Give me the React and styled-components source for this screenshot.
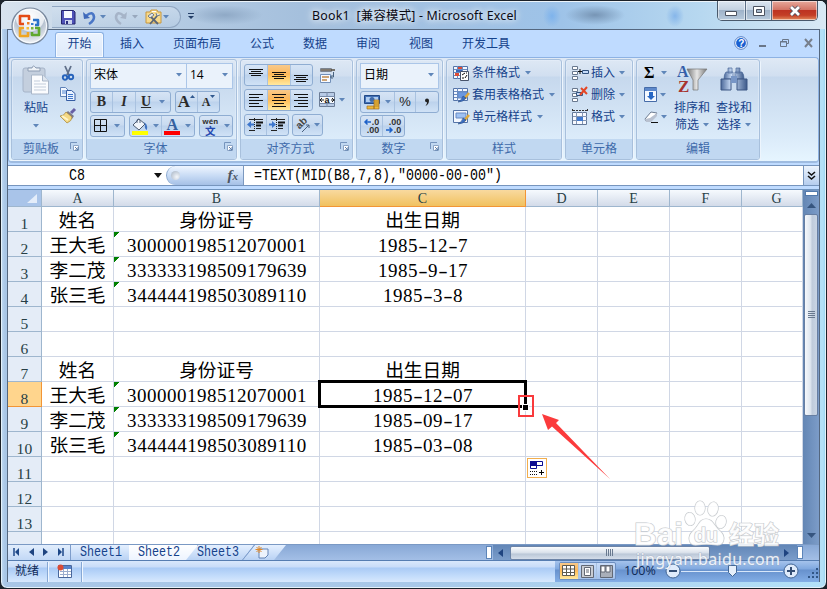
import React from "react";
import styled, { createGlobalStyle } from "styled-components";

const UI = '"Open Sans", "Noto Sans CJK SC", sans-serif';
const BLUE = "#15428b";

const Global = createGlobalStyle`
  * { box-sizing: border-box; }
  html, body { margin: 0; width: 827px; height: 589px; overflow: hidden; background: #1d242c; }
  svg { display: block; flex: none; overflow: visible; }
`;

const Window = styled.div`
  position: relative;
  width: 827px;
  height: 589px;
  padding: 0 6px 6px;
  border: 1px solid #1b2129;
  border-radius: 7px;
  overflow: hidden;
  font: 12px/16px ${UI};
  color: ${BLUE};
  background: linear-gradient(90deg, #c3dcf4 0, #a8c6e6 4px, #a8c8e8 50%, #b3e1f8 822px, #8fd0ee 100%);
  box-shadow: inset 0 0 0 1px #e4f2fb;
`;

const TitleBar = styled.header`
  display: flex;
  height: 28px;
  margin: 0 -6px;
  padding-left: 51px;
  background:
    radial-gradient(ellipse 30px 10px at 594px 14px, #7795b5 0, #7795b500),
    radial-gradient(ellipse 38px 10px at 224px 14px, #8fa9c6 0, #8fa9c600),
    radial-gradient(ellipse 9px 11px at 551px 15px, #7eb3ec 0, #7eb3ec00),
    radial-gradient(ellipse 9px 11px at 674px 15px, #86b6ea 0, #86b6ea00),
    linear-gradient(90deg, #d8e3ee, #b4cbe3 170px, #a5c0dd 300px, #9ec3e8 560px, #b7d8f0 700px, #d8e9f5);
  box-shadow: inset 0 1px #ecf4fa;
`;
const QuickBar = styled.div`
  display: flex;
  align-items: center;
  width: 129px;
  height: 22px;
  margin-top: 5px;
  padding-left: 9px;
  border: 1px solid #91a7c2;
  border-left: 0;
  border-radius: 0 12px 12px 0;
  background: linear-gradient(#d2e0ef99, #b8cde388);
`;
const Gap = styled.i`
  flex: none;
  width: ${(p) => p.$w}px;
`;
const MoreMark = styled.div`
  width: 20px;
  padding: 12px 0 0 7px;
`;
const WindowTitle = styled.h1`
  width: 240px;
  margin: 6px 0 0 111px;
  font: 12.4px/17px "Noto Sans", "Noto Sans CJK SC", sans-serif;
  letter-spacing: 0.2px;
  color: #0a0a14;
  white-space: pre;
  text-shadow: 0 0 6px #fff, 0 0 10px #fff;
`;
const Caption = styled.div`
  display: flex;
  width: 101px;
  height: 20px;
  margin-left: auto;
  margin-right: 8px;
  border: 1px solid #49596b;
  border-top: 0;
  border-radius: 0 0 5px 5px;
  overflow: hidden;
`;
const CaptionButton = styled.span`
  display: flex;
  align-items: center;
  justify-content: center;
  width: ${(p) => p.$w}px;
  border-right: ${(p) => (p.$close ? 0 : "1px solid #5b6f86")};
  background: ${(p) =>
    p.$close
      ? "linear-gradient(#e7a99c, #d37566 45%, #bd3322 50%, #c43e26 75%, #e28a5c)"
      : "linear-gradient(#dce6f0, #c4d2e1 45%, #9fb3c9 50%, #b8cadc)"};
  box-shadow: inset 0 0 0 1px #ffffff88;
`;

const Client = styled.main`
  display: flex;
  flex-direction: column;
  width: 813px;
  height: 553px;
  border: 1px solid #54677f;
  background: #bfdbff;
`;
const TabRow = styled.nav`
  display: flex;
  flex: none;
  height: 27px;
  padding: 2px 6px 0 47px;
  background: #bfdbff;
`;
const Tab = styled.span`
  padding: ${(p) => (p.$active ? "3px 11.5px 0" : "4px 14.5px 0")};
  height: 25px;
  margin-right: ${(p) => (p.$active ? "1.5px" : 0)};
  border: ${(p) => (p.$active ? "1px solid #8db2e3" : 0)};
  border-bottom: 0;
  border-radius: 3px 3px 0 0;
  background: ${(p) => (p.$active ? "linear-gradient(#ebf3fe, #dfeafa)" : "none")};
  box-shadow: ${(p) => (p.$active ? "inset 0 0 0 1px #f6faff" : "none")};
`;
const TabTools = styled.div`
  display: flex;
  align-items: flex-start;
  margin-left: auto;
  padding-top: 4px;
`;

const Ribbon = styled.section`
  display: flex;
  flex: none;
  width: 811px;
  height: 106px;
  padding: 1px 2px;
  border: 1px solid #8db2e3;
  border-width: 1px 1px 2px;
  border-bottom-color: #9ebbe0;
  border-radius: 4px;
  background: linear-gradient(#dfe9f5, #d1dff0 18px, #c6d8ed 19px, #dcecfa 82px, #e6f5ff);
`;
const Group = styled.div`
  display: flex;
  flex-direction: column;
  width: ${(p) => p.$w}px;
  height: 101px;
  margin-right: 3px;
  border: 1px solid #a8c0dc;
  border-radius: 3px;
  box-shadow: inset 0 0 0 1px #e8f1fb77, 1px 1px #edf5fd;
  overflow: hidden;
`;
const GroupBody = styled.div`
  display: flex;
  flex-direction: ${(p) => (p.$row ? "row" : "column")};
  flex: 1;
  padding: ${(p) => p.$pad || "3px 3px 0"};
`;
const GroupLabel = styled.div`
  display: flex;
  justify-content: center;
  height: 20px;
  line-height: 20px;
  color: #3e6aaa;
  background: #c1d8f1;
`;
const LabelText = styled.span`
  flex: 1;
  text-align: center;
  padding-left: ${(p) => (p.$shift || 0)}px;
`;
const Line = styled.div`
  display: flex;
  align-items: center;
  flex: none;
  height: ${(p) => p.$h || 22}px;
  margin-top: ${(p) => p.$mt || 0}px;
`;
const Stack = styled.div`
  display: flex;
  flex-direction: column;
  align-items: ${(p) => p.$align || "center"};
  width: ${(p) => p.$w}px;
`;
const Combo = styled.div`
  display: flex;
  align-items: center;
  width: ${(p) => p.$w}px;
  height: 26px;
  margin-right: ${(p) => (p.$join ? -1 : 0)}px;
  padding: 0 4px 2px 3px;
  justify-content: space-between;
  border: 1px solid #abc6e8;
  background: #eaf2fb;
  color: #000;
`;
const Buttons = styled.div`
  display: flex;
  height: 22px;
  margin-right: ${(p) => p.$gap || 0}px;
  border: 1px solid #8fadd2;
  border-radius: 3px;
  overflow: hidden;
  background: linear-gradient(#d6e4f5, #c9dbf0 45%, #bcd2ec 50%, #d0e2f6);
`;
const Button = styled.span`
  display: flex;
  align-items: center;
  justify-content: center;
  gap: ${(p) => p.$gap || 0}px;
  width: ${(p) => p.$w}px;
  border-right: 1px solid #a9c2e0;
  background: ${(p) => (p.$on ? "linear-gradient(#f8c98a, #fdb85a 45%, #ffc765 60%, #ffe9a0)" : "none")};
  &:last-child { border-right: 0; }
`;
const Letter = styled.b`
  font: ${(p) => (p.$italic ? "italic " : "")}bold ${(p) => p.$size || 14}px/${(p) => p.$lh || 18}px "Liberation Serif", serif;
  text-decoration: ${(p) => (p.$under ? "underline" : "none")};
  color: ${(p) => p.$color || "#2b2b2b"};
`;
const Percent = styled.span`
  font: 13px/16px "Liberation Sans", sans-serif;
  color: #222;
`;
const ColorBar = styled.span`
  display: flex;
  flex-direction: column;
  align-items: center;
  justify-content: flex-end;
  width: 16px;
  height: 17px;
  border-bottom: 4px solid ${(p) => p.$color};
`;
const Phonetic = styled.span`
  display: flex;
  flex-direction: column;
  align-items: center;
  width: 17px;
  font: bold 7.5px/8px "Open Sans", sans-serif;
  color: #333;
`;
const PhoneticGlyph = styled.span`
  font: bold 10.5px/11px "Noto Sans CJK SC", sans-serif;
  color: #2348b0;
`;
const Decimal = styled.span`
  display: flex;
  flex-direction: column;
  align-items: flex-end;
  font: bold 9px/8px "Liberation Sans", sans-serif;
  color: #333;
`;
const DecimalLine = styled.span`
  display: flex;
  align-items: center;
  height: 8px;
`;
const Command = styled.div`
  display: flex;
  align-items: center;
  flex: none;
  height: 22px;
  gap: 2px;
  white-space: nowrap;
`;

const FormulaRow = styled.div`
  display: flex;
  flex: none;
  height: 21px;
  margin-top: 2px;
  border: 1px solid #7795bd;
  border-width: 1px 0;
  background: #fff;
`;
const NameBox = styled.div`
  display: flex;
  align-items: center;
  width: 158px;
  padding: 0 4px 0 61px;
  justify-content: space-between;
`;
const MonoText = styled.span`
  display: block;
  font-family: "Liberation Mono", monospace;
  font-size: ${(p) => p.$size || 13.33}px;
  transform: scaleY(1.18);
  white-space: pre;
  color: ${(p) => p.$color || "#000"};
`;
const FxArea = styled.div`
  display: flex;
  align-items: center;
  justify-content: space-between;
  width: 78px;
  padding: 0 5px 0 4px;
  border-right: 1px solid #7b98bf;
  border-left: 1px solid #8ba9d0;
  border-radius: 10px 0 0 10px;
  background: linear-gradient(#f0f6ff, #c9dcf5 50%, #a5c0e6);
`;
const Knob = styled.i`
  width: 9px;
  height: 9px;
  border-radius: 50%;
  background: radial-gradient(circle at 65% 65%, #f4f7fb, #a4b1c2);
`;
const Fx = styled.i`
  font: italic bold 15px/18px "Liberation Serif", serif;
  color: #4d5563;
  small { font-size: 11px; }
`;
const FormulaText = styled.div`
  display: flex;
  align-items: center;
  flex: 1;
  padding-left: 10px;
`;
const Expand = styled.div`
  display: flex;
  align-items: center;
  justify-content: center;
  width: 16px;
  border-left: 1px solid #7795bd;
  background: linear-gradient(#edf4fd, #b5cdee);
`;

const Workspace = styled.div`
  display: flex;
  flex: none;
  height: 355px;
  margin-top: 3px;
  border-top: 1px solid #6f93bd;
`;
const Sheet = styled.div`
  position: relative;
  display: grid;
  grid-template-columns: 34px 72px 206px 206px 72px 72px 72px 61px;
  grid-template-rows: 17px repeat(14, 25px);
  width: 795px;
  height: 354px;
  overflow: hidden;
  background: #fff;
`;
const Head = styled.div`
  display: flex;
  align-items: ${(p) => (p.$row ? "flex-end" : "center")};
  justify-content: center;
  padding-left: ${(p) => (p.$wide ? 9 : 0)}px;
  border-right: 1px solid #9eb6ce;
  border-bottom: 1px solid #9eb6ce;
  color: #273f46;
  font: ${(p) => (p.$row ? 15.5 : 14)}px/15px "Liberation Serif", serif;
  letter-spacing: ${(p) => (p.$row ? 0.3 : 0)}px;
  background: ${(p) =>
    p.$on
      ? p.$row ? "#ffd58d" : "linear-gradient(#f9d99f, #f1c15f)"
      : p.$row ? "#e4ecf7" : "linear-gradient(#f6fafe, #d3dbe9)"};
  border-color: ${(p) => (p.$on ? "#f29536" : "#9eb6ce")};
`;
const Corner = styled.div`
  display: flex;
  align-items: flex-end;
  justify-content: flex-end;
  padding: 0 4px 3px 0;
  border-right: 1px solid #9eb6ce;
  border-bottom: 1px solid #9eb6ce;
  background: #a9c4e9;
`;
const Cell = styled.div`
  display: flex;
  align-items: center;
  justify-content: center;
  padding-top: 3px;
  border-right: 1px solid #d0d7e5;
  border-bottom: 1px solid #d0d7e5;
  color: #000;
  font: 18.7px/21px "Liberation Serif", "Noto Sans CJK SC", serif;
  background: ${(p) =>
    p.$flag ? "linear-gradient(135deg, #008000 0 4px, transparent 4px) 0 0 / 8px 8px no-repeat #fff" : "#fff"};
`;
const Digits = styled.span`
  font-size: 19px;
  letter-spacing: 0.5px;
  line-height: 21px;
  padding: 0 0 1px 1px;
`;
const Dash = styled.span`
  display: inline-block;
  width: 10px;
  text-align: center;
  letter-spacing: 0;
  transform: scaleX(1.5);
`;
const Selection = styled.div`
  position: absolute;
  left: 310px;
  top: 190px;
  width: 209px;
  height: 28px;
  border: 3px solid #000;
`;
const RedFrame = styled.div`
  position: absolute;
  left: 510px;
  top: 205px;
  width: 16px;
  height: 22px;
  padding: 7px 0 0 2px;
  border: 2px solid #f93a3c;
`;
const Handle = styled.i`
  display: block;
  width: 7px;
  height: 7px;
  border: 1px solid #fff;
  background: #000;
`;
const FillOptions = styled.div`
  position: absolute;
  left: 519px;
  top: 268px;
  width: 20px;
  height: 20px;
  padding: 2px;
  border: 1px solid #f2ae4c;
  background: #fff;
`;
const Pointer = styled.svg`
  position: absolute;
  left: 533px;
  top: 223px;
`;

const VScroll = styled.div`
  display: flex;
  flex-direction: column;
  align-items: center;
  width: 16px;
  background: linear-gradient(90deg, #6386b4, #7c9cc8);
`;
const SplitH = styled.i`
  width: 13px;
  height: 5px;
  margin: 1px 0;
  border: 1px solid #527aac;
  background: #fff;
`;
const VThumb = styled.div`
  display: flex;
  align-items: center;
  justify-content: center;
  width: 14px;
  height: 202px;
  margin: 3px 0 auto;
  border: 1px solid #667ea2;
  border-radius: 2px;
  background: linear-gradient(90deg, #f5f8fc, #dde5ef 45%, #bfcbdb 60%, #c9d5e5);
`;

const SheetBar = styled.div`
  display: flex;
  flex: none;
  height: 16px;
  border-top: 1px solid #7a99c4;
  background: linear-gradient(#88a8d6, #a3bfe6);
`;
const NavArrows = styled.div`
  display: flex;
  align-items: center;
  width: 63px;
  padding: 0 6px 1px 5px;
  justify-content: space-between;
  background: linear-gradient(#e1edfc, #c2d8f6);
  border-right: 1px solid #7e9dcb;
`;
const TabStrip = styled.div`
  display: flex;
  width: 415px;
`;
const SheetTab = styled.div`
  width: ${(p) => p.$w}px;
  height: 15px;
  margin-left: ${(p) => p.$ml || 0}px;
  padding: 0 0 0 ${(p) => p.$pl}px;
  line-height: 14px;
  clip-path: ${(p) => (p.$slant ? "polygon(12px 0, 100% 0, calc(100% - 12px) 100%, 0 100%)" : "none")};
  background: ${(p) => (p.$on ? "linear-gradient(#fff, #edf4ff)" : "linear-gradient(#e5f0ff, #b9d2f4)")};
`;
const SlantEdge = styled.svg`
  margin-left: -12px;
  z-index: 1;
`;
const SplitV = styled.i`
  width: 6px;
  height: 13px;
  margin: 1px 1px 0 0;
  border: 1px solid #5c84b8;
  background: #fff;
`;
const HScroll = styled.div`
  display: flex;
  align-items: center;
  width: 304px;
  padding: 0 5px;
  background: linear-gradient(#6286b7, #7b9dca);
`;
const HThumb = styled.div`
  display: flex;
  align-items: center;
  justify-content: center;
  width: 200px;
  height: 14px;
  margin: 0 auto 0 7px;
  border: 1px solid #6d84a7;
  border-radius: 2px;
  background: linear-gradient(#fafbfd, #dce3ec 45%, #bcc8d8 60%, #d4dde9);
`;

const StatusBar = styled.footer`
  display: flex;
  flex: 1;
  align-items: center;
  border-top: 1px solid #567db1;
  background: linear-gradient(#d9e8fc, #c8dcf8 6px, #a9caf5 7px, #c3dcfb 15px, #d7e8fd);
`;
const StatusText = styled.span`
  width: ${(p) => p.$w}px;
  padding-left: ${(p) => p.$pl}px;
  padding-bottom: 1px;
  font-size: ${(p) => p.$size || 12}px;
  color: #102a56;
`;
const Divider = styled.i`
  width: 2px;
  height: 20px;
  border-left: 1px solid #86a8d5;
  border-right: 1px solid #f0f7ff;
`;
const ZoomArea = styled.div`
  display: flex;
  align-items: center;
  height: 21px;
  width: 264px;
  margin-left: auto;
  padding: 0 0 1px 4px;
  background: linear-gradient(#a5c3ec, #7fa8df 8px, #6791cd 9px, #83aee6);
`;
const ViewButtons = styled.div`
  display: flex;
  width: 57px;
  height: 18px;
  border: 1px solid #6d8fc0;
  border-radius: 2px;
  background: linear-gradient(#c8dcf8, #a3c2ec);
`;
const SliderTrack = styled.div`
  display: flex;
  align-items: center;
  justify-content: center;
  width: 102px;
  height: 16px;
  background: linear-gradient(#d7e6fa, #d7e6fa) 0 8px / 100% 1px no-repeat;
`;
const Grip = styled.div`
  align-self: flex-end;
  margin-left: auto;
  padding: 0 0 2px;
`;

const Orb = styled.div`
  position: absolute;
  left: 10px;
  top: 6px;
`;
const Watermark = styled.div`
  position: absolute;
  left: 633px;
  top: 498px;
  width: 160px;
  height: 74px;
`;

const Down = ({ c = "#5f86b9" }) => (
  <svg width="6" height="4"><path d="M0 0h6L3 3.500z" fill={c} /></svg>
);
const Launcher = () => (
  <svg width="12" height="20" viewBox="0 0 12 20">
    <path d="M.5 10V3.500H7" stroke="#7594bd" fill="none" /><path d="M3.500 6.500h5v5h-5z" fill="#fff" stroke="#8ba4c6" /><path d="M5 8l3 3m0-3v3H5" stroke="#5d7eab" fill="none" />
  </svg>
);
const Label = ({ children, launch, shift }) => (
  <GroupLabel>
    <LabelText $shift={shift}>{children}</LabelText>
    {launch && <Launcher />}
  </GroupLabel>
);
const TextRows = ({ kind, y }) => {
  const x = (w) => (kind === "left" ? 1 : kind === "right" ? 15 - w : 8 - w / 2);
  const full = y === undefined;
  const ws = full ? [14, 10, 14, 10, 14] : [14, 10, 14, 10];
  return (
    <svg width="17" height="18">
      {ws.map((w, i) => <path key={i} d={`M${x(w)} ${(y ?? 3) + i * (full ? 3 : 2) + 0.5}h${w}`} stroke="#111" />)}
    </svg>
  );
};
const Indent = ({ out }) => (
  <svg width="17" height="16" viewBox="0 0 17 16">
    <path d="M2 2.500h14M2 13.500h5M9 11.500h5" stroke="#222" />
    <path d="M7.500 1v14" stroke="#222" strokeDasharray="1 1" />
    <path d="M9 5.500h7M9 8.500h5" stroke="#111" strokeWidth="2" />
    {out ? <path d="M4 4L0 7.500 4 11V8.500h3v-2H4z" fill="#3d76cc" /> : <path d="M3 4l4 3.500L3 11V8.500H0v-2h3z" fill="#3d76cc" />}
  </svg>
);

const PasteIcon = () => (
  <svg width="28" height="32" viewBox="0 0 28 32">
    <rect x="1" y="4" width="22" height="24" rx="2" fill="#c4cfde" stroke="#a6b4c8" />
    <path d="M6 7V4h4q1-4 4 0h4v3z" fill="#eef2f7" stroke="#8d9db3" />
    <path d="M9.500 11h11l6 6v13h-17z" fill="#fbfcfe" stroke="#a9b6c8" />
    <path d="M20.500 11v6h6" fill="#dfe6ef" stroke="#a9b6c8" />
    <path d="M12 17h6M12 20h12M12 23h12M12 26h12" stroke="#c3cddb" />
  </svg>
);
const CutIcon = () => (
  <svg width="14" height="15" viewBox="0 0 14 15">
    <path d="M4 0l4 9M10 0L6 9" stroke="#61708a" strokeWidth="1.800" />
    <circle cx="4" cy="11.500" r="2.200" fill="none" stroke="#2763bb" strokeWidth="1.900" /><circle cx="10" cy="11" r="2.200" fill="none" stroke="#2763bb" strokeWidth="1.900" />
  </svg>
);
const CopyIcon = () => (
  <svg width="16" height="14" viewBox="0 0 16 14">
    <path d="M.5.5h5l3 3v6h-8z" fill="#f2f7ff" stroke="#5f82b8" /><path d="M2 4h4M2 6h4" stroke="#4d82d0" />
    <path d="M6.500 3.500h5l3.500 3v7H6.500z" fill="#eaf2ff" stroke="#355da3" /><path d="M8 7.500h5M8 9.500h5M8 11.500h5" stroke="#3f77cb" />
  </svg>
);
const BrushIcon = () => (
  <svg width="17" height="16" viewBox="0 0 17 16">
    <path d="M11 5l4-4" stroke="#675fa5" strokeWidth="3" /><path d="M8 3l6 5-2 3-7-5z" fill="#7d7b89" /><path d="M6 4l6 5q0 4-5 6L0 8q4 0 6-4z" fill="#f4d985" stroke="#a58434" strokeWidth=".7" /><path d="M2 8l6 4" stroke="#fff5c8" strokeWidth="2" />
  </svg>
);
const SaveIcon = () => (
  <svg width="15" height="15" viewBox="0 0 15 15">
    <path d="M.5.5h12l1.500 1.500v12H.5z" fill="#4f52b8" stroke="#25256d" /><path d="M3 1h8v7H3z" fill="#f6f8ff" /><path d="M4 10h7v4H4z" fill="#cdd4ed" /><path d="M5 11h2v3H5z" fill="#282d7e" />
  </svg>
);
const CurvedArrow = ({ redo }) => (
  <svg width="13" height="15" viewBox="0 0 13 15">
    <g transform={redo ? "translate(13 0) scale(-1 1)" : undefined}>
      <path d="M3 6q7-6 8 1 0 4-5 7" fill="none" stroke={redo ? "#a6b4c8" : "#4a76c6"} strokeWidth="2.600" /><path d="M0 2l1 7 6-1z" fill={redo ? "#a6b4c8" : "#3f69b9"} />
    </g>
  </svg>
);
const ToolsIcon = () => (
  <svg width="17" height="16" viewBox="0 0 17 16">
    <path d="M1 3h4l1-2h6l1 2h3v11H1z" fill="#f7d98b" stroke="#c7973f" /><path d="M7 3h4V2H7z" fill="#fff" /><path d="M5 15l7-8M5 7l8 8" stroke="#5b6676" strokeWidth="1.800" /><path d="M3 7l4-3 2 2-4 3zM11 4l1 3 3-1" fill="#dce4ed" stroke="#5a6679" strokeWidth=".8" />
  </svg>
);
const TableIcon = ({ kind }) => (
  <svg width="17" height="16" viewBox="0 0 17 16">
    <path d="M.5 1.500h14v12H.5z" fill="#f4f8ff" stroke="#5574a8" />
    {kind !== "style" && <path d="M1 4.500h13M1 7.500h13M1 10.500h13M4.500 1v13M9.500 1v13" stroke="#6b8bc0" />}
    {kind === "cond" && <><path d="M5 2h4v2H5zM2 8h4v3H2z" fill="#de4c36" /><path d="M3 5h6v2H3z" fill="#3a67b7" /><path d="M7.500 6.500h8v9h-8z" fill="#fff" stroke="#47536a" /><path d="M9 10l3-2M12 13l2-3M9 13h2M13 8h1" stroke="#111" /></>}
    {kind !== "cond" && <><path d={kind === "table" ? "M5 5h9v6H5z" : "M3 4h10v5H3z"} fill={kind === "table" ? "#6b98df" : "#9fc1f2"} stroke="#6689c2" /><path d="M11 12l5-6" stroke="#e1aa3a" strokeWidth="2.500" /><path d="M5 15q5 0 8-4l-3-2q-1 4-5 6z" fill="#3a6fc3" stroke="#284b85" strokeWidth=".6" /></>}
  </svg>
);
const CellsIcon = ({ kind }) => (
  <svg width="17" height="16" viewBox="0 0 17 16">
    {kind === "format" ? (
      <><path d="M.5 3.500h14v12H.5z" fill="#f8faff" stroke="#637898" /><path d="M1 7.500h14M1 11.500h14M4.500 3v12M10.500 3v12" stroke="#8295b2" /><path d="M5 8h6v4H5z" fill="#3f79cf" /><path d="M.5 0v3M15.500 0v3M1 1.500h14" stroke="#333" strokeDasharray="2 1" /></>
    ) : (
      <><path d="M.5 1.500h5v3h-5zM.5 6.500h5v3h-5zM.5 11.500h5v3h-5z" fill="#fff" stroke="#68788f" />
        {kind === "insert" ? <><path d="M6 6.500h4M8 4v5" stroke="#111" /><path d="M10.500 5.500h6v3h-6z" fill="#c5dcfa" stroke="#31527f" /></> : <><path d="M4.500 5.500h6v3h-6z" fill="#c5dcfa" stroke="#31527f" /><path d="M9 1l6 6M15 0L8 8" stroke="#e44625" strokeWidth="2" /></>}</>
    )}
  </svg>
);
const BucketIcon = () => (
  <svg width="16" height="13" viewBox="0 0 16 13"><path d="M7 1l6 5-6 6-6-5z" fill="#f1f5fa" stroke="#4d5b70" /><path d="M5 5V2q1-2 3 0v3" fill="none" stroke="#566780" /><path d="M11 4q5 1 4 8-3-1-2-6z" fill="#3e73c3" /></svg>
);
const WrapIcon = () => (
  <svg width="17" height="17" viewBox="0 0 17 17"><path d="M1.500 1.500h11v3h-11z" fill="#fff" stroke="#7c8490" /><path d="M2 3h14" stroke="#554b3e" strokeWidth="1.500" /><path d="M1.500 7.500h10v8h-10z" fill="#f9fbff" stroke="#7390b9" /><path d="M3 10h7M3 13h5" stroke="#c0894b" strokeWidth="1.500" /><path d="M14.500 5v5h-3m2-2l-2 2 2 2" stroke="#47617f" fill="none" /></svg>
);
const MergeIcon = () => (
  <svg width="17" height="16" viewBox="0 0 17 16"><path d="M.5.5h15v14H.5z" fill="#f7faff" stroke="#6b7c96" /><path d="M1 1h14v3H1zM1 12h14v2H1z" fill="#b8cbe6" /><path d="M1 4.500h15M1 11.500h15M8 0v4M8 12v3" stroke="#768aa9" /><path d="M1 8h4M16 8h-4M3 6L1 8l2 2M13 6l2 2-2 2" stroke="#222" fill="none" /><text x="5.500" y="10.500" fontFamily="Liberation Sans" fontWeight="bold" fontSize="9" fill="#111">a</text></svg>
);
const OrientationIcon = () => (
  <svg width="17" height="17" viewBox="0 0 17 17"><text transform="translate(4.500 12.500) rotate(-45)" fontFamily="Liberation Sans" fontSize="10" fontWeight="bold" fill="#444">ab</text><path d="M7 15l7-7m-3 0h3v3" stroke="#49617e" fill="none" /></svg>
);
const MoneyIcon = () => (
  <svg width="17" height="17" viewBox="0 0 17 17"><path d="M.5 1.500h15v8H.5z" fill="#4271b7" stroke="#234a86" /><path d="M2 3h12v5H2z" fill="#afcdf1" /><circle cx="8" cy="5.500" r="2.500" fill="#416caa" /><path d="M10 6h5v9h-5zM3 12h7v3H3z" fill="#efb939" stroke="#a37020" strokeWidth=".7" /><path d="M10 8h5m-5 2h5m-5 2h5" stroke="#a87527" strokeWidth=".7" /></svg>
);
const SortIcon = () => (
  <svg width="31" height="31" viewBox="0 0 31 31">
    <defs><linearGradient id="metal"><stop stopColor="#777" /><stop offset=".5" stopColor="#e6e6e6" /><stop offset="1" stopColor="#777" /></linearGradient></defs>
    <path d="M10 5h20l-9 11v10h-5V16z" fill="url(#metal)" stroke="#777" strokeWidth=".7" />
    <text x="0" y="13" fontFamily="Liberation Serif" fontWeight="bold" fontSize="16" fill="#355fa9">A</text><text x="1" y="28" fontFamily="Liberation Serif" fontWeight="bold" fontSize="17" fill="#a7332f">Z</text>
  </svg>
);
const Binoculars = () => (
  <svg width="28" height="27" viewBox="0 0 28 27">
    <defs><linearGradient id="bino"><stop stopColor="#4c699a" /><stop offset=".4" stopColor="#d0e2fb" /><stop offset="1" stopColor="#3d5a8a" /></linearGradient></defs>
    <path d="M8 2h4v5H8zM16 2h4v5h-4zM6 6h7v7H4q0-5 2-7zM15 6h7q2 2 2 7h-9z" fill="url(#bino)" stroke="#4b689a" strokeWidth=".7" /><path d="M1 13h10v11H1zM17 13h10v11H17z" fill="url(#bino)" stroke="#3d5684" /><path d="M11 10h6v7h-6z" fill="#7896c6" />
  </svg>
);
const FillIcon = () => (
  <svg width="14" height="16" viewBox="0 0 14 16"><path d="M.5.500h12v14H.5z" fill="#f5f9ff" stroke="#466ca8" /><path d="M1 1h12v3H1z" fill="#5e89cb" /><path d="M5 5h4v4h2l-4 4-4-4h2z" fill="#2868c5" /></svg>
);
const Eraser = () => (
  <svg width="15" height="14" viewBox="0 0 15 14"><path d="M1 9l6-7 6 1-6 8H2z" fill="#fff" stroke="#6c7b91" /><path d="M1 9l5-1 7-5v3l-6 6H2z" fill="#b8c1d0" /><path d="M7 12.500h7" stroke="#111" /></svg>
);
const OrbIcon = () => (
  <svg width="40" height="40" viewBox="0 0 40 40">
    <defs>
      <radialGradient id="orb" cx=".5" cy=".25" r=".8"><stop stopColor="#fff" /><stop offset=".48" stopColor="#e7ebf0" /><stop offset=".52" stopColor="#b7c2d0" /><stop offset="1" stopColor="#fff" /></radialGradient>
    </defs>
    <circle cx="19" cy="19" r="18" fill="url(#orb)" stroke="#78889d" strokeWidth="1.200" />
    <circle cx="19" cy="19" r="16.500" fill="none" stroke="#f9fcff" />
    <g fill="none" strokeWidth="2.600" strokeLinejoin="round">
      <path d="M13 17H9V9h9v4" stroke="#e44b16" /><path d="M22 13h5v5h-3" stroke="#2b73c9" /><path d="M13 21H9v8h8v-4" stroke="#f0a522" /><path d="M24 21h4v7h-7v-3" stroke="#60a82d" />
    </g>
    <path d="M16 15h2.500v2.500H16z" fill="#f27d20" /><path d="M20 16h2.500v2H20z" fill="#377fd0" /><path d="M15.500 20H18v2.500h-2.500z" fill="#f6bd35" /><path d="M20 20h2.500v2.500H20z" fill="#79b73a" />
  </svg>
);

const names = ["王大毛", "李二茂", "张三毛"];
const ids = ["300000198512070001", "333333198509179639", "344444198503089110"];
const block = (dates) => [
  ["姓名", "身份证号", "出生日期"],
  ...names.map((n, i) => [n, ids[i], dates[i]]),
];
const rows = [
  ...block(["1985-12-7", "1985-9-17", "1985-3-8"]),
  [], [],
  ...block(["1985-12-07", "1985-09-17", "1985-03-08"]),
  [], [], [], [],
];
const Value = ({ v }) => {
  if (!v) return null;
  if (!/^\d/.test(v)) return v;
  return (
    <Digits>
      {v.split("-").map((p, i) => <React.Fragment key={i}>{i > 0 && <Dash>-</Dash>}{p}</React.Fragment>)}
    </Digits>
  );
};

const Grid = () => (
  <Sheet>
    <Corner><svg width="10" height="9"><path d="M10 0v9H0z" fill="#e4edfa" /></svg></Corner>
    {[..."ABCDEFG"].map((c) => <Head key={c} $on={c === "C"} $wide={c === "G"}>{c}</Head>)}
    {rows.map((r, i) => (
      <React.Fragment key={i}>
        <Head $row $on={i === 7}>{i < 13 ? i + 1 : ""}</Head>
        {[0, 1, 2, 3, 4, 5, 6].map((c) => (
          <Cell key={c} $flag={c === 1 && /^\d/.test(r[1] || "")}><Value v={r[c]} /></Cell>
        ))}
      </React.Fragment>
    ))}
    <Selection />
    <RedFrame><Handle /></RedFrame>
    <FillOptions>
      <svg width="15" height="15" viewBox="0 0 15 15"><path d="M.5.5h12v4H.5zM.5.5h6v7h-6z" fill="#fff" stroke="#0b0b91" /><path d="M0 0h7v5H0z" fill="#0b0b91" /><path d="M6.500 4.500h6" stroke="#0b0b91" /><path d="M0 10.500h8M0 13.500h8" stroke="#111" strokeDasharray="1 1" /><path d="M9 11.500h5M11.500 9v5" stroke="#000" /></svg>
    </FillOptions>
    <Pointer width="72" height="68" viewBox="0 0 72 68"><path d="M1 1l17 6-3 3L69 66 11 13.500 7 17z" fill="#fb3b3c" /></Pointer>
  </Sheet>
);

const QuickAccess = () => (
  <>
    <QuickBar>
      <SaveIcon /><Gap $w={7} /><CurvedArrow /><Gap $w={4} /><Down /><Gap $w={8} /><CurvedArrow redo /><Gap $w={5} /><Down c="#98a8bd" /><Gap $w={7} /><ToolsIcon /><Gap $w={1} /><Down />
    </QuickBar>
    <MoreMark><svg width="7" height="7"><path d="M0 .5h6" stroke="#243f68" /><path d="M0 3h6L3 6z" fill="#243f68" /></svg></MoreMark>
  </>
);

const TitleArea = () => (
  <TitleBar>
    <QuickAccess />
    <WindowTitle>{"Book1  [兼容模式] - Microsoft Excel"}</WindowTitle>
    <Caption>
      <CaptionButton $w={28}><svg width="14" height="12"><path d="M1.500 6.500h11v4h-11z" fill="#fff" stroke="#4c5360" /></svg></CaptionButton>
      <CaptionButton $w={27}><svg width="14" height="12"><path d="M1.500 1.500h11v9h-11z" fill="#fff" stroke="#4c5360" /><path d="M4.500 4.500h5v3h-5z" fill="#a9bacd" stroke="#4c5360" /></svg></CaptionButton>
      <CaptionButton $w={45} $close><svg width="14" height="12"><path d="M3 2l8 8M11 2l-8 8" stroke="#515360" strokeWidth="4.500" /><path d="M3 2l8 8M11 2l-8 8" stroke="#fff" strokeWidth="2.700" /></svg></CaptionButton>
    </Caption>
  </TitleBar>
);

const Tabs = () => (
  <TabRow>
    <Tab $active>开始</Tab>
    {["插入", "页面布局", "公式", "数据", "审阅", "视图", "开发工具"].map((t) => <Tab key={t}>{t}</Tab>)}
    <TabTools>
      <svg width="14" height="14" viewBox="0 0 14 14"><circle cx="7" cy="7" r="6.300" fill="#fff" stroke="#537cc3" /><circle cx="7" cy="7" r="4.900" fill="#1960d2" /><text x="4.200" y="10.500" fontFamily="Liberation Sans" fontWeight="bold" fontSize="10" fill="#fff">?</text></svg>
      <Gap $w={11} />
      <svg width="8" height="14"><path d="M0 10h7" stroke="#6a7688" strokeWidth="2" /></svg><Gap $w={13} />
      <svg width="10" height="14"><path d="M.5 5.500h6v5h-6zM2.500 5V3.500h6v4H7M0 6h7" fill="none" stroke="#6a7688" /></svg><Gap $w={14} />
      <svg width="9" height="14"><path d="M1 3l7 8M8 3l-7 8" stroke="#777f8c" strokeWidth="2" /></svg>
    </TabTools>
  </TabRow>
);

const RibbonArea = () => (
  <Ribbon>
    <Group $w={72}>
      <GroupBody $row $pad="4px 0 0 10px">
        <Stack $w={28}><PasteIcon /><Line $h={16} $mt={4}>粘贴</Line><Line $h={4} $mt={8}><Down /></Line></Stack>
        <Gap $w={9} />
        <Stack $w={18}><Line $h={19}><CutIcon /></Line><Line $h={22}><CopyIcon /></Line><Line $h={22}><BrushIcon /></Line></Stack>
      </GroupBody>
      <Label launch shift={0}>剪贴板</Label>
    </Group>
    <Group $w={151}>
      <GroupBody>
        <Line $h={26}><Combo $w={97} $join>宋体<Down /></Combo><Combo $w={47}>14<Down /></Combo></Line>
        <Line $mt={2}>
          <Buttons $gap={4}><Button $w={22}><Letter>B</Letter></Button><Button $w={23}><Letter $italic>I</Letter></Button><Button $w={34} $gap={8}><Letter $under>U</Letter><Down /></Button></Buttons>
          <Buttons><Button $w={22}><Letter $size={17}>A</Letter><svg width="5" height="16"><path d="M0 4h5L2.500 1z" fill="#31598f" /></svg></Button><Button $w={21}><Letter $size={12}>A</Letter><svg width="5" height="16"><path d="M0 1h5L2.500 4z" fill="#31598f" /></svg></Button></Buttons>
        </Line>
        <Line $mt={2}>
          <Buttons $gap={4}><Button $w={33} $gap={6}><svg width="14" height="14"><path d="M.5.5h12v12H.5zM6.500 0v13M0 6.500h13" stroke="#111" fill="none" /></svg><Down /></Button></Buttons>
          <Buttons $gap={4}><Button $w={33} $gap={5}><ColorBar $color="#ffff00"><BucketIcon /></ColorBar><Down /></Button><Button $w={32} $gap={5}><ColorBar $color="#fe0000"><Letter $size={16} $lh={13} $color="#35609f">A</Letter></ColorBar><Down /></Button></Buttons>
          <Buttons><Button $w={33} $gap={5}><Phonetic>wén<PhoneticGlyph>文</PhoneticGlyph></Phonetic><Down /></Button></Buttons>
        </Line>
      </GroupBody>
      <Label launch shift={0}>字体</Label>
    </Group>
    <Group $w={113}>
      <GroupBody $pad="4px 3px 0">
        <Line><Buttons $gap={6}><Button $w={23}><TextRows y={3} /></Button><Button $w={23} $on><TextRows y={6} /></Button><Button $w={21}><TextRows y={9} /></Button></Buttons><WrapIcon /></Line>
        <Line $mt={3}><Buttons $gap={6}><Button $w={23}><TextRows kind="left" /></Button><Button $w={23} $on><TextRows /></Button><Button $w={21}><TextRows kind="right" /></Button></Buttons><MergeIcon /><Gap $w={3} /><Down /></Line>
        <Line $mt={3}><Buttons $gap={3}><Button $w={22}><Indent out /></Button><Button $w={21}><Indent /></Button></Buttons><Buttons><Button $w={29} $gap={2}><OrientationIcon /><Down /></Button></Buttons></Line>
      </GroupBody>
      <Label launch shift={0}>对齐方式</Label>
    </Group>
    <Group $w={87}>
      <GroupBody>
        <Line $h={26}><Combo $w={80}>日期<Down /></Combo></Line>
        <Line $mt={2}><Buttons><Button $w={34} $gap={4}><MoneyIcon /><Down /></Button><Button $w={22}><Percent>%</Percent></Button><Button $w={22}><svg width="6" height="10"><path d="M1 3.500a2 2 0 1 1 4 0Q5 7 1.500 9 3.500 6 3 5.300 1 5.500 1 3.500z" fill="#222" /></svg></Button></Buttons></Line>
        <Line $mt={2}>
          <Buttons>
            <Button $w={22}><Decimal><DecimalLine><svg width="8" height="6"><path d="M7 3H1.500M3.500 .5L1 3l2.500 2.500" stroke="#1d61c9" fill="none" strokeWidth="1.500" /></svg>.0</DecimalLine><DecimalLine>.00</DecimalLine></Decimal></Button>
            <Button $w={21}><Decimal><DecimalLine>.00</DecimalLine><DecimalLine><svg width="8" height="6"><path d="M0 3h5.500M3.500 .5L6 3 3.500 5.500" stroke="#1d61c9" fill="none" strokeWidth="1.500" /></svg>.0</DecimalLine></Decimal></Button>
          </Buttons>
        </Line>
      </GroupBody>
      <Label launch shift={0}>数字</Label>
    </Group>
    <Group $w={116}>
      <GroupBody $pad="2px 6px 0">
        <Command><TableIcon kind="cond" />条件格式<Gap $w={1} /><Down /></Command>
        <Command><TableIcon kind="table" />套用表格格式<Gap $w={1} /><Down /></Command>
        <Command><TableIcon kind="style" />单元格样式<Gap $w={1} /><Down /></Command>
      </GroupBody>
      <Label>样式</Label>
    </Group>
    <Group $w={68}>
      <GroupBody $pad="2px 5px 0 6px">
        <Command><CellsIcon kind="insert" />插入<Gap $w={0} /><Down /></Command>
        <Command><CellsIcon kind="delete" />删除<Gap $w={0} /><Down /></Command>
        <Command><CellsIcon kind="format" />格式<Gap $w={0} /><Down /></Command>
      </GroupBody>
      <Label>单元格</Label>
    </Group>
    <Group $w={124}>
      <GroupBody $row $pad="2px 0 0 7px">
        <Stack $w={30} $align="flex-start">
          <Command><Letter $size={16} $color="#000">Σ</Letter><Gap $w={3} /><Down /></Command>
          <Command><FillIcon /><Down /></Command>
          <Command><Eraser /><Down /></Command>
        </Stack>
        <Stack $w={36}><Line $h={34}><SortIcon /></Line><Line $h={16} $mt={4}>排序和</Line><Line $h={16} $mt={1}>筛选<Gap $w={4} /><Down /></Line></Stack>
        <Gap $w={6} />
        <Stack $w={36}><Line $h={34}><Binoculars /></Line><Line $h={16} $mt={4}>查找和</Line><Line $h={16} $mt={1}>选择<Gap $w={4} /><Down /></Line></Stack>
      </GroupBody>
      <Label>编辑</Label>
    </Group>
  </Ribbon>
);

const Side = ({ d }) => <svg width="5" height="8"><path d={d === "left" ? "M5 0v8L0 4z" : "M0 0v8l5-4z"} fill="#1f4480" /></svg>;
const SheetTabs = () => (
  <SheetBar>
    <NavArrows>
      <svg width="7" height="8"><path d="M1 0v8" stroke="#1d4788" strokeWidth="1.500" /><path d="M6 0v8L2 4z" fill="#1d4788" /></svg><Side d="left" /><Side d="right" /><svg width="7" height="8"><path d="M6 0v8" stroke="#1d4788" strokeWidth="1.500" /><path d="M1 0v8l4-4z" fill="#1d4788" /></svg>
    </NavArrows>
    <TabStrip>
      <SheetTab $w={58} $pl={9}><MonoText $size={11.67} $color={BLUE}>Sheet1</MonoText></SheetTab>
      <SheetTab $w={68} $pl={9} $on><MonoText $size={11.67} $color={BLUE}>Sheet2</MonoText></SheetTab>
      <SheetTab $w={68} $ml={-11} $pl={11} $slant><MonoText $size={11.67} $color={BLUE}>Sheet3</MonoText></SheetTab>
      <SlantEdge width="13" height="15"><path d="M12.500 0L.5 15" stroke="#7e9dcb" /></SlantEdge>
      <SheetTab $w={43} $ml={-12} $pl={12} $slant><svg width="15" height="15" viewBox="0 0 15 15"><path d="M4 4h9v6l-3 3H4z" fill="#edf3fc" stroke="#6484b5" /><path d="M4 1v7M.5 4.500h7M1.500 2l5 5M6.500 2l-5 5" stroke="#df892a" /></svg></SheetTab>
    </TabStrip>
    <SplitV />
    <HScroll><Side d="left" /><HThumb><svg width="8" height="7"><path d="M.5 0v7M2.500 0v7M4.500 0v7M6.500 0v7" stroke="#69798f" /></svg></HThumb><Side d="right" /><Gap $w={3} /></HScroll>
    <SplitV />
  </SheetBar>
);

const ZoomKnob = ({ plus }) => (
  <svg width="16" height="16"><circle cx="8" cy="8" r="7" fill="#dfebfb" stroke="#426695" /><path d={plus ? "M4 8h8M8 4v8" : "M4 8h8"} stroke="#344e74" strokeWidth="2" /></svg>
);
const Status = () => (
  <StatusBar>
    <StatusText $w={39} $pl={7}>就绪</StatusText><Divider /><Gap $w={8} />
    <svg width="16" height="15"><path d="M1.500 1.500h13v12h-13z" fill="#fff" stroke="#48679c" /><path d="M2 2h12v3H2z" fill="#5783cb" /><path d="M3 7.500h11M3 10.500h11M6.500 5v8M10.500 5v8" stroke="#9aacce" /><circle cx="3.500" cy="3.500" r="3" fill="#da4b35" /></svg>
    <Gap $w={8} /><Divider />
    <ZoomArea>
      <ViewButtons>
        <Button $w={19} $on><svg width="14" height="12"><path d="M.5.5h12v10H.5zM0 4h13M0 7.500h13M4.500 0v11M8.500 0v11" fill="#fff" stroke="#5d5b51" /></svg></Button>
        <Button $w={18}><svg width="13" height="13"><path d="M.5.5h12v12H.5z" fill="#c9cdd3" stroke="#626975" /><path d="M3.500 2.500h6v8h-6z" fill="#fff" stroke="#626975" /><path d="M5 5h3M5 7h3" stroke="#626975" /></svg></Button>
        <Button $w={18}><svg width="13" height="13"><path d="M.5.5h12v12H.5z" fill="#a9afb9" stroke="#626975" /><path d="M1 1h4v6H1zM6 1h4v6H6z" fill="#fff" stroke="#626975" /></svg></Button>
      </ViewButtons>
      <StatusText $w={49} $pl={8} $size={12.5}>100%</StatusText>
      <ZoomKnob /><SliderTrack><svg width="9" height="14"><path d="M.5 1.500h8v7l-4 4-4-4z" fill="#e6effa" stroke="#426695" /></svg></SliderTrack><ZoomKnob plus />
      <Grip><svg width="11" height="11"><path d="M8 1h2M8 5h2M4 5h2M8 9h2M4 9h2M0 9h2" stroke="#315687" strokeWidth="2" /></svg></Grip>
    </ZoomArea>
  </StatusBar>
);

const Brand = () => (
  <Watermark>
    <svg width="160" height="74" viewBox="0 0 160 74">
      <g fill="#ffffffd8" stroke="#c4c8cc" strokeWidth="1.200" paintOrder="stroke">
        <ellipse cx="56" cy="20" rx="5" ry="6.500" transform="rotate(-12 56 20)" /><ellipse cx="66" cy="9" rx="5" ry="7" /><ellipse cx="79" cy="10" rx="5" ry="7" transform="rotate(10 79 10)" /><ellipse cx="87" cy="23" rx="5" ry="6.500" transform="rotate(15 87 23)" />
        <path d="M72 20c7 0 8 7 14 12 6 5 5 15-4 14-6-1-13-1-19 0-9 1-10-9-4-14 6-5 6-12 13-12z" />
        <g fontFamily="Liberation Sans" fontWeight="bold"><text x="0" y="46" fontSize="32" textLength="49" lengthAdjust="spacingAndGlyphs">Bai</text><text x="60" y="43" fontSize="20" textLength="24">du</text></g>
        <text x="95" y="45" fontFamily="Noto Sans CJK SC" fontWeight="bold" fontSize="25">经验</text>
      </g>
      <text x="2" y="66" fontFamily="Noto Sans" fontSize="16" fill="#ffffffd8" stroke="#9aa8bd66" strokeWidth="1.500" paintOrder="stroke" textLength="144">jingyan.baidu.com</text>
    </svg>
  </Watermark>
);

export default function App() {
  return (
    <>
      <Global />
      <Window>
        <TitleArea />
        <Client>
          <Tabs />
          <RibbonArea />
          <FormulaRow>
            <NameBox><MonoText>C8</MonoText><svg width="8" height="5"><path d="M0 0h8L4 5z" fill="#111" /></svg></NameBox>
            <FxArea><Knob /><Fx>f<small>x</small></Fx></FxArea>
            <FormulaText><MonoText>{'=TEXT(MID(B8,7,8),"0000-00-00")'}</MonoText></FormulaText>
            <Expand><svg width="9" height="10"><path d="M1 1l3.500 3L8 1M1 5l3.500 3L8 5" stroke="#111" fill="none" strokeWidth="1.600" /></svg></Expand>
          </FormulaRow>
          <Workspace>
            <Grid />
            <VScroll>
              <SplitH />
              <Line $h={11} $mt={3}><svg width="9" height="5"><path d="M0 5h9L4.500 0z" fill="#36557f" /></svg></Line>
              <VThumb><svg width="7" height="8"><path d="M0 .5h7M0 2.500h7M0 4.500h7M0 6.500h7" stroke="#69798f" /></svg></VThumb>
              <Line $h={18}><svg width="9" height="5"><path d="M0 0h9L4.500 5z" fill="#36557f" /></svg></Line>
            </VScroll>
          </Workspace>
          <SheetTabs />
          <Status />
        </Client>
        <Orb><OrbIcon /></Orb>
        <Brand />
      </Window>
    </>
  );
}
